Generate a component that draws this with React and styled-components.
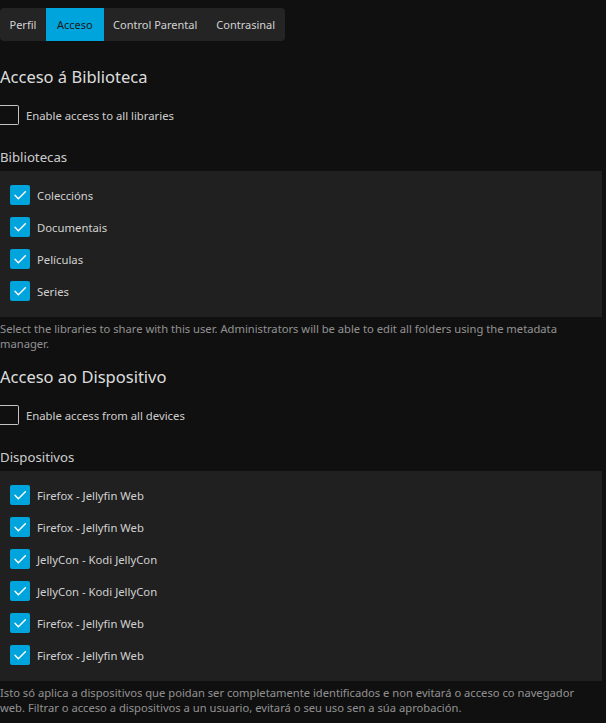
import React from 'react';
import styled, { createGlobalStyle } from 'styled-components';

const GlobalStyle = createGlobalStyle`
  html, body {
    margin: 0;
    padding: 0;
    background: #101010;
    color: rgba(255,255,255,0.8);
    font-family: "Noto Sans", "Open Sans", sans-serif;
  }
`;

const libraries = ['Colecciόns', 'Documentais', 'Películas', 'Series'];
const devices = [
  'Firefox - Jellyfin Web',
  'Firefox - Jellyfin Web',
  'JellyCon - Kodi JellyCon',
  'JellyCon - Kodi JellyCon',
  'Firefox - Jellyfin Web',
  'Firefox - Jellyfin Web',
];
const tabs = ['Perfil', 'Acceso', 'Control Parental', 'Contrasinal'];

function Check() {
  return (
    <svg width="16" height="16" viewBox="0 0 24 24" fill="none">
      <path d="M4.5 12.5l5 5L20 7" stroke="#fff" strokeWidth="2.2" strokeLinecap="round" strokeLinejoin="round" />
    </svg>
  );
}

function App() {
  return (
    <Page>
      <GlobalStyle />
      <TabBar>
        {tabs.map(t => (
          <Tab key={t} $active={t === 'Acceso'}>{t}</Tab>
        ))}
      </TabBar>

      <Title>Acceso á Biblioteca</Title>
      <Toggle>
        <EmptyBox />
        <span>Enable access to all libraries</span>
      </Toggle>
      <ListLabel>Bibliotecas</ListLabel>
      <Panel>
        {libraries.map(l => (
          <Row key={l}>
            <CheckedBox><Check /></CheckedBox>
            <span>{l}</span>
          </Row>
        ))}
      </Panel>
      <Help>Select the libraries to share with this user. Administrators will be able to edit all folders using the metadata manager.</Help>

      <Title>Acceso ao Dispositivo</Title>
      <Toggle>
        <EmptyBox />
        <span>Enable access from all devices</span>
      </Toggle>
      <ListLabel>Dispositivos</ListLabel>
      <Panel>
        {devices.map((d, i) => (
          <Row key={i}>
            <CheckedBox><Check /></CheckedBox>
            <span>{d}</span>
          </Row>
        ))}
      </Panel>
      <Help>Isto só aplica a dispositivos que poidan ser completamente identificados e non evitará o acceso co navegador web. Filtrar o acceso a dispositivos a un usuario, evitará o seu uso sen a súa aprobación.</Help>
    </Page>
  );
}

const Page = styled.div`
  display: flex;
  flex-direction: column;
  align-items: flex-start;
  padding-top: 8px;
`;

const TabBar = styled.div`
  display: flex;
  background: #242424;
  border-radius: 4px;
  overflow: hidden;
  height: 33px;
`;

const Tab = styled.div`
  display: flex;
  align-items: center;
  padding: 0 ${p => (p.$active ? '11px' : '9.5px')};
  font-size: 11px;
  color: ${p => (p.$active ? '#1a1a1a' : 'rgba(255,255,255,0.8)')};
  background: ${p => (p.$active ? '#00a4dc' : 'transparent')};
`;

const Title = styled.h2`
  margin: 0;
  font-size: 16.5px;
  font-weight: 400;
  color: rgba(255,255,255,0.87);
  margin-top: 24px;
  line-height: 24px;
  &:nth-of-type(2) { margin-top: 14px; }
`;

const Toggle = styled.div`
  display: flex;
  align-items: center;
  gap: 7px;
  margin-top: 16px;
  font-size: 11.3px;
  color: rgba(255,255,255,0.8);
`;

const EmptyBox = styled.div`
  width: 18px;
  height: 18px;
  border: 1.5px solid rgba(255,255,255,0.75);
  border-left: none;
  border-radius: 0 2px 2px 0;
`;

const ListLabel = styled.div`
  margin-top: 22px;
  font-size: 13.2px;
  line-height: 20px;
  color: rgba(255,255,255,0.8);
`;

const Panel = styled.div`
  align-self: stretch;
  margin-right: 4px;
  margin-top: 4px;
  background: #202020;
  padding: 8px 10px 10px;
  display: flex;
  flex-direction: column;
`;

const Row = styled.div`
  display: flex;
  align-items: center;
  height: 32px;
  gap: 7px;
  font-size: 11.3px;
  color: rgba(255,255,255,0.8);
`;

const CheckedBox = styled.div`
  width: 20px;
  height: 20px;
  border-radius: 2px;
  background: #00a4dc;
  display: flex;
  align-items: center;
  justify-content: center;
`;

const Help = styled.p`
  margin: 4px 0 0;
  font-size: 11.2px;
  line-height: 15px;
  color: rgba(255,255,255,0.55);
  padding-right: 22px;
`;

export default App;
